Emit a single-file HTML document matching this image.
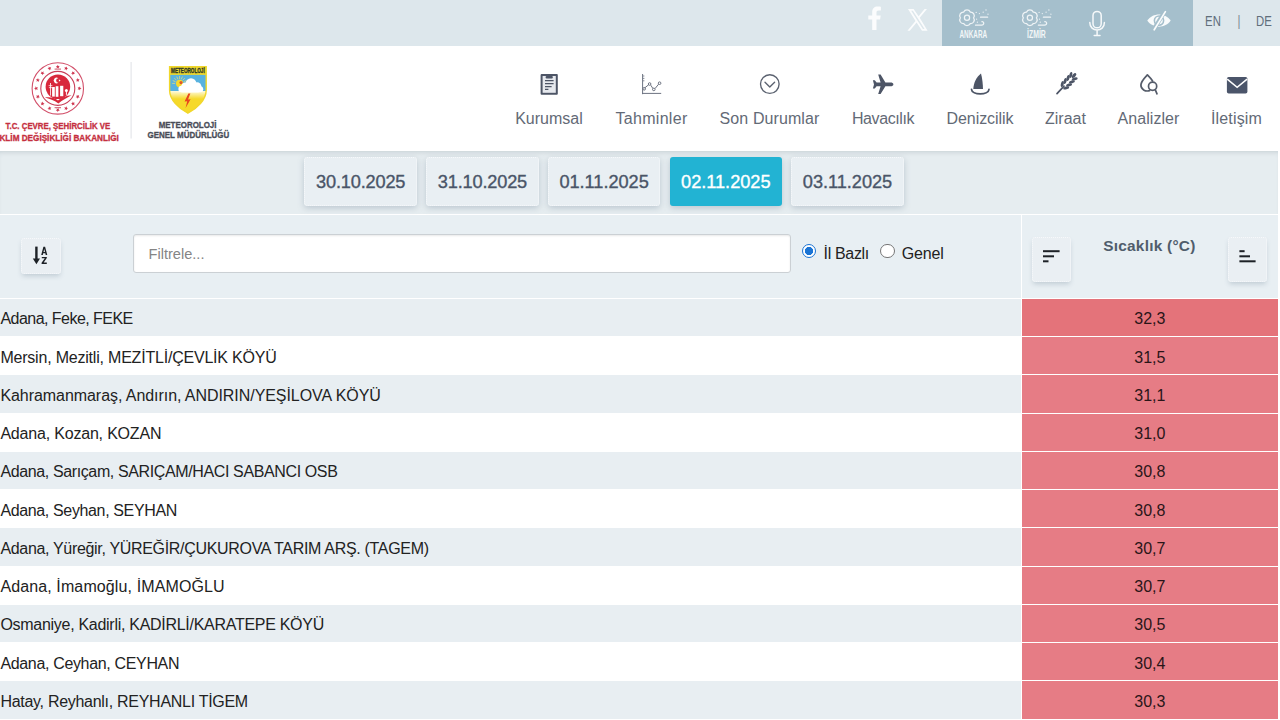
<!DOCTYPE html>
<html lang="tr">
<head>
<meta charset="utf-8">
<title>En Yüksek Sıcaklıklar</title>
<style>
*{box-sizing:border-box;margin:0;padding:0}
html,body{width:1280px;height:720px;overflow:hidden;background:#fff}
body{font-family:"Liberation Sans",sans-serif;position:relative;color:#222}
.abs{position:absolute}
#top{position:absolute;left:0;top:0;width:1280px;height:45.7px;background:#dde7ec}
#top .dark{position:absolute;left:942px;top:0;width:250.5px;height:45.7px;background:#a5bfcc}
#top .lang{position:absolute;top:21.4px;font-size:14.2px;color:#606e7b;white-space:nowrap;transform:translate(-50%,-50%) scaleX(.8)}
#hdr{position:absolute;left:0;top:45.7px;width:1280px;height:105.3px;background:#fff}
.nav{position:absolute;top:118.6px;font-size:16px;color:#636a76;white-space:nowrap;transform:translate(-50%,-50%)}
#dates{position:absolute;left:0;top:151px;width:1277.7px;height:62.5px;background:#e6edf0;box-shadow:inset 0 4px 5px -3px rgba(125,140,150,.32)}
.db{position:absolute;top:6px;width:112.6px;height:49.4px;border:1px dotted #f7f9fb;border-radius:3px;background:#e9eff3;box-shadow:0 2px 6px rgba(110,130,150,.35);color:#4a5568;font-size:18.2px;line-height:49px;text-align:center;-webkit-text-stroke:.35px #4a5568}
.db.on{background:#22b3d3;color:#fff;border-color:#22b3d3;-webkit-text-stroke:.35px #fff}
#flt{position:absolute;left:0;top:214.6px;width:1277.7px;height:83.2px;background:#e8eff3}
#flt .vl{position:absolute;left:1020.5px;top:0;width:1.5px;height:84px;background:#fff}
.btn{position:absolute;border:1px dotted #f7f9fb;border-radius:3px;background:#eaeff3;box-shadow:0 3px 5px -1px rgba(110,130,150,.32)}
#inp{position:absolute;left:133px;top:19px;width:658px;height:39.5px;background:#fff;border:1px solid #cbd0d4;border-radius:3px;box-shadow:inset 0 1px 2px rgba(0,0,0,.09);font-size:14.6px;color:#858585;line-height:38.5px;padding-left:14.5px}
.radio{position:absolute;width:14.4px;height:14.4px;border-radius:50%;border:1.3px solid #767676;background:#fff}
.radio.on{border-color:#1b74d4;background:radial-gradient(circle,#1b74d4 0 3.9px,#fff 4.4px)}
.rl{position:absolute;font-size:16px;color:#222;white-space:nowrap}
.row{position:absolute;left:0;width:1020.9px;height:37.4px;font-size:16px;line-height:33.7px;padding-top:3.5px;white-space:nowrap;padding-left:.4px;color:#222}
.row.a{background:#e8eef2}
.val{position:absolute;left:1022px;width:255.7px;height:37.25px;font-size:16px;line-height:33.7px;padding-top:3.5px;text-align:center;background:#e67c85;color:#2a1518}
.val.f{background:#e4737a}
</style>
<style id="fit">
#n0{letter-spacing:0.017px}
#n1{letter-spacing:0.318px}
#n2{letter-spacing:0.091px}
#n3{letter-spacing:-0.400px}
#n4{letter-spacing:-0.064px}
#n5{letter-spacing:-0.001px}
#n6{letter-spacing:0.055px}
#n7{letter-spacing:0.146px}
#r0{letter-spacing:-0.532px}
#r1{letter-spacing:-0.206px}
#r2{letter-spacing:-0.058px}
#r3{letter-spacing:-0.191px}
#r4{letter-spacing:-0.377px}
#r5{letter-spacing:-0.360px}
#r6{letter-spacing:-0.320px}
#r7{letter-spacing:0.116px}
#r8{letter-spacing:-0.285px}
#r9{letter-spacing:-0.339px}
#r10{letter-spacing:-0.286px}
#d0{letter-spacing:-0.181px}
#d1{letter-spacing:-0.181px}
#d2{letter-spacing:-0.032px}
#d3{letter-spacing:-0.032px}
#d4{letter-spacing:-0.032px}
#l0{letter-spacing:-0.345px}
#l1{letter-spacing:-0.176px}
#sc{letter-spacing:0.255px}
</style>
</head>
<body>
<div id="top">
  <div class="dark"></div>
  <div class="lang" style="left:1212.7px">EN</div><div class="lang" style="left:1238.5px;color:#7b8792">|</div><div class="lang" style="left:1263.5px">DE</div>
</div>
<div id="hdr"></div>
<div class="nav" id="n0" style="left:549px">Kurumsal</div>
<div class="nav" id="n1" style="left:651.5px">Tahminler</div>
<div class="nav" id="n2" style="left:769.5px">Son Durumlar</div>
<div class="nav" id="n3" style="left:883px">Havacılık</div>
<div class="nav" id="n4" style="left:980px">Denizcilik</div>
<div class="nav" id="n5" style="left:1065.5px">Ziraat</div>
<div class="nav" id="n6" style="left:1148.5px">Analizler</div>
<div class="nav" id="n7" style="left:1236.5px">İletişim</div>
<!--ICONS-->
<svg class="abs" style="left:0;top:0" width="1280" height="151" viewBox="0 0 1280 151">
<g fill="#fff" fill-opacity=".88">
<path d="M872.2 30 V19.6 H868.3 V15.4 H872.2 V12.3 C872.2 8.6 874.4 6.6 877.7 6.6 C879.2 6.6 880.5 6.75 880.9 6.8 V10.6 H878.7 C876.9 10.6 876.5 11.5 876.5 12.7 V15.4 H880.7 L880.1 19.6 H876.5 V30 Z"/>
<path d="M908 9 H913.6 L918.6 16.2 L924.6 9 H927 L919.7 17.8 L927.6 30.8 H922 L916.6 22.6 L909.8 30.8 H907.4 L915.5 21 Z M911.2 10.7 L922.9 29.1 H924.6 L912.9 10.7 Z" fill-rule="evenodd"/>
</g>
<g fill="none" stroke="#fff" stroke-opacity=".82" stroke-width="1.25" stroke-linecap="round"><path d="M963.70 12.08 A3.63 3.63 0 0 1 970.30 12.08 A3.63 3.63 0 0 1 973.60 17.80 A3.63 3.63 0 0 1 970.30 23.52 A3.63 3.63 0 0 1 963.70 23.52 A3.63 3.63 0 0 1 960.40 17.80 A3.63 3.63 0 0 1 963.70 12.08 Z"/><circle cx="967" cy="17.8" r="2.6"/><path d="M980.5 17.2 H987.6"/><path d="M975.5 25.2 H981.6 C984.4 25.2 984.4 21.4 981.9 21.6"/></g><g fill="#fff" fill-opacity=".8"><circle cx="976.2" cy="12.4" r=".65"/><circle cx="979.4" cy="13.6" r=".65"/><circle cx="983.2" cy="12.2" r=".65"/><circle cx="986.0" cy="10.0" r=".65"/><circle cx="988.0" cy="14.2" r=".65"/><circle cx="976.6" cy="19.2" r=".65"/><circle cx="977.4" cy="22.2" r=".65"/></g><text x="959.5" y="38.4" textLength="27.700000000000045" lengthAdjust="spacingAndGlyphs" font-family="Liberation Sans, sans-serif" font-weight="bold" font-size="11.2" fill="#fff" fill-opacity=".88">ANKARA</text>
<g fill="none" stroke="#fff" stroke-opacity=".82" stroke-width="1.25" stroke-linecap="round"><path d="M1026.60 12.08 A3.63 3.63 0 0 1 1033.20 12.08 A3.63 3.63 0 0 1 1036.50 17.80 A3.63 3.63 0 0 1 1033.20 23.52 A3.63 3.63 0 0 1 1026.60 23.52 A3.63 3.63 0 0 1 1023.30 17.80 A3.63 3.63 0 0 1 1026.60 12.08 Z"/><circle cx="1029.9" cy="17.8" r="2.6"/><path d="M1043.4 17.2 H1050.5"/><path d="M1038.4 25.2 H1044.5 C1047.3 25.2 1047.3 21.4 1044.8 21.6"/></g><g fill="#fff" fill-opacity=".8"><circle cx="1039.1" cy="12.4" r=".65"/><circle cx="1042.3" cy="13.6" r=".65"/><circle cx="1046.1" cy="12.2" r=".65"/><circle cx="1048.9" cy="10.0" r=".65"/><circle cx="1050.9" cy="14.2" r=".65"/><circle cx="1039.5" cy="19.2" r=".65"/><circle cx="1040.3" cy="22.2" r=".65"/></g><text x="1027" y="38.4" textLength="18.799999999999955" lengthAdjust="spacingAndGlyphs" font-family="Liberation Sans, sans-serif" font-weight="bold" font-size="11.2" fill="#fff" fill-opacity=".88">İZMİR</text>
<g fill="none" stroke="#fff" stroke-opacity=".9" stroke-width="1.5" stroke-linecap="round">
<rect x="1093" y="11.4" width="8.2" height="16.4" rx="4.1"/>
<path d="M1089.8 22.4 C1089.8 32.6 1104.4 32.6 1104.4 22.4 M1097.1 30.2 V35 M1094.2 35.4 H1100"/>
</g>
<g>
<path d="M1147.3 20.6 C1152.5 12.4 1165.5 12.4 1170.7 20.6 C1165.5 28.8 1152.5 28.8 1147.3 20.6 Z" fill="#fff" fill-opacity=".93"/>
<circle cx="1159" cy="20.6" r="4.6" fill="none" stroke="#a5bfcc" stroke-width="1.6"/>
<path d="M1153.6 29.6 L1164.8 11.4" stroke="#a5bfcc" stroke-width="4.2"/>
<path d="M1154.2 29.8 L1165.4 11.6" stroke="#fff" stroke-opacity=".95" stroke-width="1.7" stroke-linecap="round"/>
</g>

<!--HDR-->
<g>
<circle cx="57.8" cy="88.4" r="25.7" fill="none" stroke="#d2506a" stroke-width="1.1"/>
<circle cx="57.8" cy="88.4" r="17" fill="none" stroke="#c9405a" stroke-width="1.1"/>
<g fill="#cf3650">
<polygon points="57.80,64.65 58.37,66.02 59.84,66.14 58.72,67.10 59.06,68.54 57.80,67.77 56.54,68.54 56.88,67.10 55.76,66.14 57.23,66.02"/>
<polygon points="66.89,66.46 66.89,67.94 68.21,68.61 66.80,69.07 66.57,70.53 65.70,69.34 64.23,69.57 65.10,68.37 64.43,67.05 65.84,67.50"/>
<polygon points="74.59,71.61 74.03,72.98 74.99,74.10 73.51,73.99 72.74,75.25 72.39,73.81 70.95,73.46 72.21,72.69 72.10,71.21 73.22,72.17"/>
<polygon points="79.74,79.31 78.70,80.36 79.15,81.77 77.83,81.10 76.63,81.97 76.86,80.50 75.67,79.63 77.13,79.40 77.59,77.99 78.26,79.31"/>
<polygon points="81.55,88.40 80.18,88.97 80.06,90.44 79.10,89.32 77.66,89.66 78.43,88.40 77.66,87.14 79.10,87.48 80.06,86.36 80.18,87.83"/>
<polygon points="79.74,97.49 78.26,97.49 77.59,98.81 77.13,97.40 75.67,97.17 76.86,96.30 76.63,94.83 77.83,95.70 79.15,95.03 78.70,96.44"/>
<polygon points="74.59,105.19 73.22,104.63 72.10,105.59 72.21,104.11 70.95,103.34 72.39,102.99 72.74,101.55 73.51,102.81 74.99,102.70 74.03,103.82"/>
<polygon points="66.89,110.34 65.84,109.30 64.43,109.75 65.10,108.43 64.23,107.23 65.70,107.46 66.57,106.27 66.80,107.73 68.21,108.19 66.89,108.86"/>
<polygon points="57.80,112.15 57.23,110.78 55.76,110.66 56.88,109.70 56.54,108.26 57.80,109.03 59.06,108.26 58.72,109.70 59.84,110.66 58.37,110.78"/>
<polygon points="48.71,110.34 48.71,108.86 47.39,108.19 48.80,107.73 49.03,106.27 49.90,107.46 51.37,107.23 50.50,108.43 51.17,109.75 49.76,109.30"/>
<polygon points="41.01,105.19 41.57,103.82 40.61,102.70 42.09,102.81 42.86,101.55 43.21,102.99 44.65,103.34 43.39,104.11 43.50,105.59 42.38,104.63"/>
<polygon points="35.86,97.49 36.90,96.44 36.45,95.03 37.77,95.70 38.97,94.83 38.74,96.30 39.93,97.17 38.47,97.40 38.01,98.81 37.34,97.49"/>
<polygon points="34.05,88.40 35.42,87.83 35.54,86.36 36.50,87.48 37.94,87.14 37.17,88.40 37.94,89.66 36.50,89.32 35.54,90.44 35.42,88.97"/>
<polygon points="35.86,79.31 37.34,79.31 38.01,77.99 38.47,79.40 39.93,79.63 38.74,80.50 38.97,81.97 37.77,81.10 36.45,81.77 36.90,80.36"/>
<polygon points="41.01,71.61 42.38,72.17 43.50,71.21 43.39,72.69 44.65,73.46 43.21,73.81 42.86,75.25 42.09,73.99 40.61,74.10 41.57,72.98"/>
<polygon points="48.71,66.46 49.76,67.50 51.17,67.05 50.50,68.37 51.37,69.57 49.90,69.34 49.03,70.53 48.80,69.07 47.39,68.61 48.71,67.94"/>
</g>
<path d="M54.599999999999994 69.10000000000001 H61.0 M54.599999999999994 107.7 H61.0" stroke="#c9405a" stroke-width=".9"/>
<clipPath id="dc"><path d="M40 70 H76 V95.2 L66 97.2 L58 100 L50 98.6 L40 97.4 Z"/></clipPath>
<circle cx="57.9" cy="86.8" r="12.3" fill="#d8283c" clip-path="url(#dc)"/>
<g fill="#fff">
<rect x="52.1" y="87" width="2.7" height="9.6"/>
<rect x="55.7" y="86.2" width="2.7" height="10.6"/>
<rect x="60.1" y="85.8" width="3.2" height="10.4"/>
<circle cx="66.4" cy="90.4" r="1.5"/>
<rect x="65.9" y="90.4" width="1" height="4.4"/>
<rect x="50.1" y="83" width=".8" height="12.6"/>
<rect x="48.6" y="85.4" width="3.8" height=".7"/>
<rect x="48.9" y="87.4" width="3.2" height=".7"/>
</g>
<path d="M58.4 78.2 A2.9 2.9 0 1 0 58.4 82.8 A2.3 2.3 0 1 1 58.4 78.2 Z" fill="#fff"/>
<g fill="#fff"><polygon points="59.99,79.31 60.06,80.17 60.85,80.50 60.06,80.83 59.99,81.69 59.43,81.03 58.59,81.23 59.04,80.50 58.59,79.77 59.43,79.97"/></g>
<path d="M44.8 97.6 C49.4 96.6 54.4 97.6 58 100.4 C61 97.6 66 95.6 71.6 95.2 C67.4 97.6 62.4 100 58.4 103.4 C54 100.4 49.4 98.8 44.8 97.6 Z" fill="#d8283c"/>
</g>
<g font-family="Liberation Sans, sans-serif" font-weight="bold" font-size="8.3" fill="#c5303f" stroke="#c5303f" stroke-width=".3" text-anchor="middle">
<text x="57.9" y="129.1" textLength="104.6" lengthAdjust="spacingAndGlyphs">T.C. ÇEVRE, ŞEHİRCİLİK VE</text>
<text x="58" y="140.5" textLength="121.6" lengthAdjust="spacingAndGlyphs">İKLİM DEĞİŞİKLİĞİ BAKANLIĞI</text>
</g>
<rect x="130.6" y="62" width="1" height="76.5" fill="#dfe2e6"/>
<g>
<clipPath id="sh"><path d="M169.6 66.6 H206.2 V90 C206.2 100 197 108.6 187.9 113.2 C178.8 108.6 169.6 100 169.6 90 Z"/></clipPath>
<g clip-path="url(#sh)">
<rect x="169" y="66" width="38" height="48" fill="#f6d92a"/>
<rect x="169" y="74.6" width="38" height="17" fill="#58b2df"/><linearGradient id="yg" x1="0" y1="0" x2="0" y2="1"><stop offset="0" stop-color="#fffbe0"/><stop offset="1" stop-color="#f6d92a"/></linearGradient><rect x="169" y="91" width="38" height="8" fill="url(#yg)"/>
<rect x="169" y="66" width="38" height="8.8" fill="#e8d531"/>
<circle cx="179.6" cy="83.4" r="3.6" fill="#f6d92a"/>
<circle cx="181" cy="82.6" r="1.6" fill="#e0562a"/>
<g stroke="#f6e36a" stroke-width=".7">
<path d="M175.20 83.40 L172.20 83.40"/>
<path d="M175.53 81.72 L172.76 80.57"/>
<path d="M176.49 80.29 L174.37 78.17"/>
<path d="M177.92 79.33 L176.77 76.56"/>
<path d="M179.60 79.00 L179.60 76.00"/>
<path d="M181.28 79.33 L182.43 76.56"/>
<path d="M182.71 80.29 L184.83 78.17"/>
<path d="M183.67 81.72 L186.44 80.57"/>
<path d="M184.00 83.40 L187.00 83.40"/>
</g>
<g fill="#fff"><circle cx="185.4" cy="86.6" r="4.2"/><circle cx="191" cy="83.6" r="5.4"/><circle cx="197" cy="86.6" r="4.4"/><circle cx="181.6" cy="89" r="3.2"/><circle cx="200.2" cy="89.2" r="3"/><rect x="180" y="86.6" width="21" height="5.8" rx="2.8"/></g>
<path d="M188.4 93.6 L184.6 101.4 L187.2 101.2 L185.6 108 L190.6 99.2 L188 99.4 L190.4 93.6 Z" fill="#e8451e"/>
</g>
<path d="M169.6 66.6 H206.2 V90 C206.2 100 197 108.6 187.9 113.2 C178.8 108.6 169.6 100 169.6 90 Z" fill="none" stroke="#f1d72b" stroke-width="1.4"/>
<text x="187.9" y="73.4" text-anchor="middle" textLength="33.6" lengthAdjust="spacingAndGlyphs" font-family="Liberation Sans, sans-serif" font-weight="bold" font-size="7.8" fill="#2c3526" stroke="#2c3526" stroke-width=".35">METEOROLOJİ</text>
</g>
<g font-family="Liberation Sans, sans-serif" font-weight="bold" font-size="8.5" fill="#484c57" stroke="#484c57" stroke-width=".3" text-anchor="middle">
<text x="187.6" y="128.2" textLength="57.8" lengthAdjust="spacingAndGlyphs">METEOROLOJİ</text>
<text x="188.4" y="138.2" textLength="81.9" lengthAdjust="spacingAndGlyphs">GENEL MÜDÜRLÜĞÜ</text>
</g>
<g><rect x="540.6" y="74" width="17.2" height="20.8" rx="1" fill="#4d5566"/>
<rect x="542.6" y="76" width="13.2" height="16.8" fill="#e6e9ee"/>
<rect x="545.6" y="76" width="7.2" height="2.4" rx="1" fill="#4d5566"/>
<path d="M545 80.6 H553.6 M545 83.6 H553.6 M545 86.6 H551.6 M545 89.4 H548.4" stroke="#4d5566" stroke-width="1.3"/>
</g>
<g fill="none" stroke="#6c7280" stroke-width="1">
<path d="M642.6 74 V94.2 M642 93.4 H661.2" />
<path d="M644.6 88 L648.6 84.8 M650.8 85.2 L652.8 88.4 M655 88.6 L658.6 84.2"/>
<circle cx="644.2" cy="88.8" r="1.3"/><circle cx="649.6" cy="84" r="1.3"/><circle cx="653.8" cy="89.4" r="1.3"/><circle cx="659.6" cy="83.2" r="1.3"/>
<path d="M643 76 H644.4 M643 78.4 H644.4 M643 80.8 H644.4" stroke-width=".8"/>
</g>
<g fill="none" stroke="#5b6270" stroke-width="1.35"><circle cx="769.8" cy="84.1" r="9.3"/><path d="M765 82.2 L769.8 87 L774.6 82.2" stroke-linecap="round" stroke-linejoin="round"/></g>
<path fill="#4d5566" d="M893.4 84.4 C893.4 85.6 892 86.2 890.6 86.2 H885.4 L880.6 94.1 H878.2 L880.6 86.2 H876.6 L874.8 88.6 H872.9 L874 84.4 L872.9 80.2 H874.8 L876.6 82.6 H880.6 L878.2 74.6 H880.6 L885.4 82.6 H890.6 C892 82.6 893.4 83.2 893.4 84.4 Z"/>
<g><path fill="#4d5566" d="M981 73.4 C982.2 78 982.9 83.6 983 89 H973.3 C973.6 82.6 976.4 76.8 981 73.4 Z"/>
<path fill="none" stroke="#4d5566" stroke-width="1.7" stroke-linecap="round" d="M971.5 89.4 C971.8 95.4 988.7 95.4 989 89.4"/></g>
<g fill="#4d5566" stroke="none">
<path d="M1057 93.6 L1064 86.2" stroke="#4d5566" stroke-width="1.7" stroke-linecap="round" fill="none"/>
<ellipse cx="1062.30" cy="84.00" rx="3.1" ry="1.45" transform="rotate(-78 1062.30 84.00)"/>
<ellipse cx="1066.20" cy="87.90" rx="3.1" ry="1.45" transform="rotate(-14 1066.20 87.90)"/>
<ellipse cx="1065.16" cy="80.98" rx="3.1" ry="1.45" transform="rotate(-78 1065.16 80.98)"/>
<ellipse cx="1069.06" cy="84.88" rx="3.1" ry="1.45" transform="rotate(-14 1069.06 84.88)"/>
<ellipse cx="1068.02" cy="77.95" rx="3.1" ry="1.45" transform="rotate(-78 1068.02 77.95)"/>
<ellipse cx="1071.92" cy="81.85" rx="3.1" ry="1.45" transform="rotate(-14 1071.92 81.85)"/>
<ellipse cx="1070.78" cy="75.04" rx="3.1" ry="1.45" transform="rotate(-78 1070.78 75.04)"/>
<ellipse cx="1074.68" cy="78.94" rx="3.1" ry="1.45" transform="rotate(-14 1074.68 78.94)"/>
<ellipse cx="1074.00" cy="75.60" rx="3.0" ry="1.5" transform="rotate(-46 1074.00 75.60)"/>
</g>
<g fill="none" stroke="#555c6a" stroke-width="1.7" stroke-linecap="round" stroke-linejoin="round">
<path d="M1149.6 90.6 C1145.4 92 1140.9 89.4 1140.9 85 C1140.9 81.4 1144.4 78 1147.4 74.8 C1149.4 76.8 1151.4 79 1152.6 81"/>
<circle cx="1152.6" cy="86.2" r="4.1"/><path d="M1155.2 89.6 L1157 93.8"/>
</g>
<g><rect x="1226.9" y="76.9" width="20.5" height="16.6" rx="1.8" fill="#4b556a"/><path d="M1227.2 79.2 L1237.15 87.4 L1247.1 79.2" fill="none" stroke="#fff" stroke-width="1.5"/></g>
</svg>
<!--/ICONS-->
<div id="dates">
  <div class="db" id="d0" style="left:304.4px">30.10.2025</div>
  <div class="db" id="d1" style="left:426.1px">31.10.2025</div>
  <div class="db" id="d2" style="left:547.8px">01.11.2025</div>
  <div class="db on" id="d3" style="left:669.5px">02.11.2025</div>
  <div class="db" id="d4" style="left:791.2px">03.11.2025</div>
</div>
<div id="flt">
  <div class="vl"></div>
  <div class="btn" style="left:20.8px;top:23.2px;width:40px;height:36.4px"></div>
  <div id="inp">Filtrele...</div>
  <div class="radio on" style="left:801.6px;top:29.2px"></div>
  <div class="rl" id="l0" style="left:823.6px;top:30.5px">İl Bazlı</div>
  <div class="radio" style="left:880.3px;top:29.3px"></div>
  <div class="rl" id="l1" style="left:901.8px;top:30.5px">Genel</div>
  <div class="btn" style="left:1031.8px;top:22px;width:39px;height:45.4px"></div>
  <div class="btn" style="left:1227.8px;top:22px;width:39.2px;height:45.4px"></div>
  <div class="rl" id="sc" style="left:1149.4px;top:22.8px;transform:translateX(-50%);font-weight:bold;color:#505d6c;font-size:15.4px">Sıcaklık (°C)</div>
  <svg class="abs" style="left:0;top:0" width="1280" height="84" viewBox="0 214.7 1280 84">
    <g fill="#1d2126">
      <rect x="35.2" y="246.3" width="2.4" height="13"/>
      <path d="M32.8 258.2 H40 L36.4 263.9 Z"/>
      <path d="M41.2 254.6 L43.4 246.5 H45.1 L47.3 254.6 H45.7 L45.3 252.9 H43.2 L42.8 254.6 Z M43.5 251.7 H45 L44.25 248.6 Z" fill-rule="evenodd"/>
      <path d="M41.8 256.6 H46.8 V257.8 L43.7 262.2 H46.8 V263.6 H41.6 V262.4 L44.8 258 H41.8 Z"/>
      <rect x="1043" y="249.9" width="16.6" height="2"/><rect x="1043" y="255" width="11" height="2"/><rect x="1043" y="260" width="5.5" height="2"/>
      <rect x="1239.4" y="249.9" width="5.2" height="2"/><rect x="1239.4" y="255" width="10.6" height="2"/><rect x="1239.4" y="260" width="16.2" height="2"/>
    </g>
  </svg>
</div>
<div id="rows">
<div class="row a" id="r0" style="top:298.75px">Adana, Feke, FEKE</div><div class="val f" style="top:298.75px">32,3</div>
<div class="row" id="r1" style="top:337.00px">Mersin, Mezitli, MEZİTLİ/ÇEVLİK KÖYÜ</div><div class="val" style="top:337.00px">31,5</div>
<div class="row a" id="r2" style="top:375.25px">Kahramanmaraş, Andırın, ANDIRIN/YEŞİLOVA KÖYÜ</div><div class="val" style="top:375.25px">31,1</div>
<div class="row" id="r3" style="top:413.50px">Adana, Kozan, KOZAN</div><div class="val" style="top:413.50px">31,0</div>
<div class="row a" id="r4" style="top:451.75px">Adana, Sarıçam, SARIÇAM/HACI SABANCI OSB</div><div class="val" style="top:451.75px">30,8</div>
<div class="row" id="r5" style="top:490.00px">Adana, Seyhan, SEYHAN</div><div class="val" style="top:490.00px">30,8</div>
<div class="row a" id="r6" style="top:528.25px">Adana, Yüreğir, YÜREĞİR/ÇUKUROVA TARIM ARŞ. (TAGEM)</div><div class="val" style="top:528.25px">30,7</div>
<div class="row" id="r7" style="top:566.50px">Adana, İmamoğlu, İMAMOĞLU</div><div class="val" style="top:566.50px">30,7</div>
<div class="row a" id="r8" style="top:604.75px">Osmaniye, Kadirli, KADİRLİ/KARATEPE KÖYÜ</div><div class="val" style="top:604.75px">30,5</div>
<div class="row" id="r9" style="top:643.00px">Adana, Ceyhan, CEYHAN</div><div class="val" style="top:643.00px">30,4</div>
<div class="row a" id="r10" style="top:681.25px">Hatay, Reyhanlı, REYHANLI TİGEM</div><div class="val" style="top:681.25px">30,3</div>
</div>
</body>
</html>
